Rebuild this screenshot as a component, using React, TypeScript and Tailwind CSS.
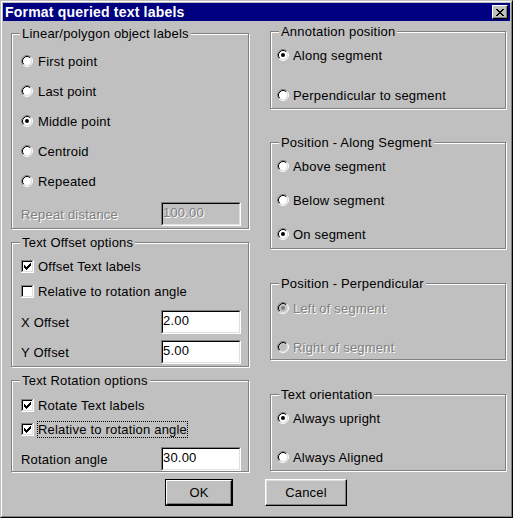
import React from "react"

// Win95 style dialog: "Format queried text labels"

const Radio = ({ checked, disabled }: { checked?: boolean; disabled?: boolean }) => (
  <svg width="12" height="12" viewBox="0 0 12 12" className="shrink-0">
    <circle cx="6" cy="6" r="4.5" fill={disabled ? "#c0c0c0" : "#ffffff"} />
    <path d="M2.11 9.89 A5.5 5.5 0 0 1 9.89 2.11" fill="none" stroke="#808080" strokeWidth="1" />
    <path d="M9.89 2.11 A5.5 5.5 0 0 1 2.11 9.89" fill="none" stroke="#ffffff" strokeWidth="1" />
    <path d="M2.82 9.18 A4.5 4.5 0 0 1 9.18 2.82" fill="none" stroke="#000000" strokeWidth="1" />
    <path d="M9.18 2.82 A4.5 4.5 0 0 1 2.82 9.18" fill="none" stroke="#dfdfdf" strokeWidth="1" />
    {checked && <circle cx="6" cy="6" r="2" fill={disabled ? "#808080" : "#000000"} />}
  </svg>
)

const Check = ({ checked }: { checked?: boolean }) => (
  <svg width="13" height="13" viewBox="0 0 13 13" shapeRendering="crispEdges" className="shrink-0">
    <rect x="0" y="0" width="12" height="1" fill="#808080" />
    <rect x="0" y="0" width="1" height="12" fill="#808080" />
    <rect x="0" y="12" width="13" height="1" fill="#ffffff" />
    <rect x="12" y="0" width="1" height="13" fill="#ffffff" />
    <rect x="1" y="1" width="10" height="1" fill="#000000" />
    <rect x="1" y="1" width="1" height="10" fill="#000000" />
    <rect x="1" y="11" width="11" height="1" fill="#dfdfdf" />
    <rect x="11" y="1" width="1" height="11" fill="#dfdfdf" />
    <rect x="2" y="2" width="9" height="9" fill="#ffffff" />
    {checked && (
      <g fill="#000000">
        <rect x="9" y="3" width="1" height="1" />
        <rect x="8" y="4" width="2" height="1" />
        <rect x="3" y="5" width="1" height="1" />
        <rect x="7" y="5" width="3" height="1" />
        <rect x="3" y="6" width="2" height="1" />
        <rect x="6" y="6" width="3" height="1" />
        <rect x="3" y="7" width="5" height="1" />
        <rect x="4" y="8" width="3" height="1" />
        <rect x="5" y="9" width="1" height="1" />
      </g>
    )}
  </svg>
)

const Group = ({ label, className, children }: { label: string; className: string; children: React.ReactNode }) => (
  <div className={`relative border border-[#808080] shadow-[inset_1px_1px_0_#ffffff,1px_1px_0_#ffffff] ${className}`}>
    <span className="absolute left-[8px] -top-[8px] px-[2px] bg-[#c0c0c0] leading-[15px] whitespace-nowrap">{label}</span>
    {children}
  </div>
)

const RadioRow = ({
  label,
  checked,
  disabled,
  className = "",
  gap = "ml-[4px]",
}: {
  label: string
  checked?: boolean
  disabled?: boolean
  className?: string
  gap?: string
}) => (
  <div className={`flex items-center ${className}`}>
    <Radio checked={checked} disabled={disabled} />
    <span
      className={`${gap} border border-transparent leading-[15px] whitespace-nowrap ${
        disabled ? "text-[#808080] [text-shadow:1px_1px_0_#ffffff]" : ""
      }`}
    >
      {label}
    </span>
  </div>
)

const CheckRow = ({
  label,
  checked,
  focused,
  className = "",
}: {
  label: string
  checked?: boolean
  focused?: boolean
  className?: string
}) => (
  <div className={`flex items-center ${className}`}>
    <Check checked={checked} />
    <span
      className={`ml-[3px] border leading-[15px] whitespace-nowrap ${
        focused ? "border-dotted border-black" : "border-transparent"
      }`}
    >
      {label}
    </span>
  </div>
)

const Field = ({ value, disabled }: { value: string; disabled?: boolean }) => (
  <div className="w-[80px] h-[24px] shrink-0 border border-t-[#808080] border-l-[#808080] border-b-white border-r-white">
    <div
      className={`h-full border border-t-black border-l-black border-b-[#dfdfdf] border-r-[#dfdfdf] pt-[1px] leading-[15px] ${
        disabled ? "bg-[#c0c0c0] text-[#808080] [text-shadow:1px_1px_0_#ffffff]" : "bg-white"
      }`}
    >
      {value}
    </div>
  </div>
)

const FieldRow = ({
  label,
  value,
  disabled,
  className = "",
}: {
  label: string
  value: string
  disabled?: boolean
  className?: string
}) => (
  <div className={`flex items-center justify-between ${className}`}>
    <span className={`leading-[15px] ${disabled ? "text-[#808080] [text-shadow:1px_1px_0_#ffffff]" : ""}`}>{label}</span>
    <Field value={value} disabled={disabled} />
  </div>
)

export default function App() {
  return (
    <div className="w-[513px] h-[518px] bg-[#c0c0c0] border border-t-[#c0c0c0] border-l-[#c0c0c0] border-r-black border-b-black font-['Liberation_Sans',Arial,sans-serif] text-[13px] tracking-[0.2px] text-black select-none">
      <div className="h-full flex flex-col p-[1px] border border-t-white border-l-white border-r-[#808080] border-b-[#808080]">
        {/* Title bar */}
        <div className="h-[18px] shrink-0 bg-[#000080] flex items-center justify-between pl-[2px] pr-[2px]">
          <span className="text-white font-bold text-[14px] leading-[18px]">Format queried text labels</span>
          <div className="w-[16px] h-[14px] border border-t-white border-l-white border-b-black border-r-black shadow-[inset_-1px_-1px_0_#808080] bg-[#c0c0c0] flex items-center justify-center">
            <svg width="8" height="7" viewBox="0 0 8 7" shapeRendering="crispEdges">
              <g fill="#000000">
                <rect x="0" y="0" width="2" height="1" />
                <rect x="6" y="0" width="2" height="1" />
                <rect x="1" y="1" width="2" height="1" />
                <rect x="5" y="1" width="2" height="1" />
                <rect x="2" y="2" width="4" height="1" />
                <rect x="3" y="3" width="2" height="1" />
                <rect x="2" y="4" width="4" height="1" />
                <rect x="1" y="5" width="2" height="1" />
                <rect x="5" y="5" width="2" height="1" />
                <rect x="0" y="6" width="2" height="1" />
                <rect x="6" y="6" width="2" height="1" />
              </g>
            </svg>
          </div>
        </div>

        {/* Body */}
        <div className="flex">
          {/* Left column */}
          <div className="ml-[8px] mt-[12px] w-[238px] flex flex-col">
            <Group label="Linear/polygon object labels" className="h-[196px] pt-[12px] pl-[9px] pr-[7px]">
              <RadioRow label="First point" className="h-[30px]" />
              <RadioRow label="Last point" className="h-[30px]" />
              <RadioRow label="Middle point" checked className="h-[30px]" />
              <RadioRow label="Centroid" className="h-[30px]" />
              <RadioRow label="Repeated" className="h-[30px]" />
              <FieldRow label="Repeat distance" value="100.00" disabled className="mt-[6px] h-[24px]" />
            </Group>

            <Group label="Text Offset options" className="mt-[13px] h-[125px] pt-[11px] pl-[9px] pr-[7px]">
              <CheckRow label="Offset Text labels" checked className="h-[25px]" />
              <CheckRow label="Relative to rotation angle" className="h-[25px]" />
              <FieldRow label="X Offset" value="2.00" className="mt-[6px] h-[24px]" />
              <FieldRow label="Y Offset" value="5.00" className="mt-[6px] h-[24px]" />
            </Group>

            <Group label="Text Rotation options" className="mt-[13px] h-[92px] pt-[12px] pl-[9px] pr-[7px]">
              <CheckRow label="Rotate Text labels" checked className="h-[24px]" />
              <CheckRow label="Relative to rotation angle" checked focused className="h-[24px]" />
              <FieldRow label="Rotation angle" value="30.00" className="mt-[6px] h-[24px]" />
            </Group>
          </div>

          {/* Right column */}
          <div className="ml-[21px] mt-[10px] w-[236px] flex flex-col">
            <Group label="Annotation position" className="h-[78px] pt-[11px] pl-[6px]">
              <RadioRow label="Along segment" checked gap="ml-[3px]" className="h-[24px]" />
              <RadioRow label="Perpendicular to segment" gap="ml-[3px]" className="mt-[16px] h-[24px]" />
            </Group>

            <Group label="Position - Along Segment" className="mt-[33px] h-[107px] pt-[11px] pl-[6px]">
              <RadioRow label="Above segment" gap="ml-[3px]" className="h-[24px]" />
              <RadioRow label="Below segment" gap="ml-[3px]" className="mt-[10px] h-[24px]" />
              <RadioRow label="On segment" checked gap="ml-[3px]" className="mt-[10px] h-[24px]" />
            </Group>

            <Group label="Position - Perpendicular" className="mt-[34px] h-[77px] pt-[12px] pl-[6px]">
              <RadioRow label="Left of segment" checked disabled gap="ml-[3px]" className="h-[24px]" />
              <RadioRow label="Right of segment" disabled gap="ml-[3px]" className="mt-[15px] h-[24px]" />
            </Group>

            <Group label="Text orientation" className="mt-[34px] h-[77px] pt-[11px] pl-[6px]">
              <RadioRow label="Always upright" checked gap="ml-[3px]" className="h-[24px]" />
              <RadioRow label="Always Aligned" gap="ml-[3px]" className="mt-[15px] h-[24px]" />
            </Group>
          </div>
        </div>

        {/* Buttons */}
        <div className="flex mt-[7px] ml-[162px] gap-[32px]">
          <div className="w-[68px] h-[27px] border border-black">
            <div className="h-full border border-t-white border-l-white border-b-black border-r-black shadow-[inset_-1px_-1px_0_#808080] flex items-center justify-center leading-[15px]">
              OK
            </div>
          </div>
          <div className="w-[82px] h-[27px] border border-t-white border-l-white border-b-black border-r-black shadow-[inset_-1px_-1px_0_#808080,inset_1px_1px_0_#dfdfdf] flex items-center justify-center leading-[15px]">
            Cancel
          </div>
        </div>
      </div>
    </div>
  )
}
